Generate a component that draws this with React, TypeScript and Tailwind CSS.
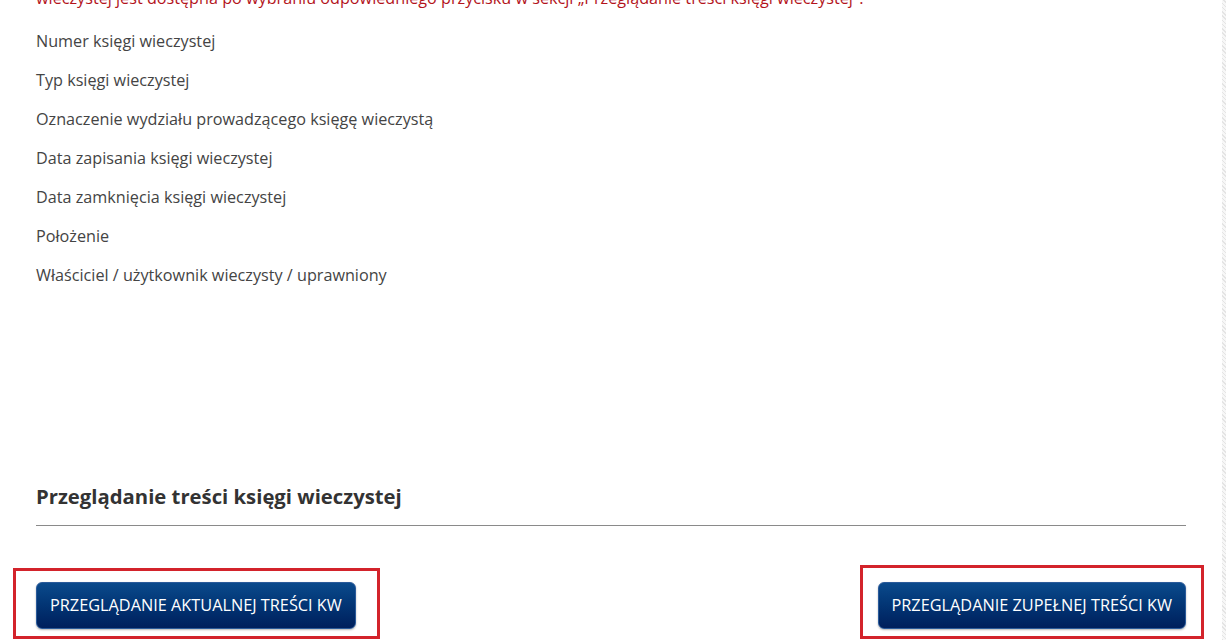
const fields = [
  'Numer księgi wieczystej',
  'Typ księgi wieczystej',
  'Oznaczenie wydziału prowadzącego księgę wieczystą',
  'Data zapisania księgi wieczystej',
  'Data zamknięcia księgi wieczystej',
  'Położenie',
  'Właściciel / użytkownik wieczysty / uprawniony',
];

function KwButton({ label }: { label: string }) {
  return (
    <button className="h-[47px] px-[13px] rounded-[6px] border border-[#2a5a9a] bg-gradient-to-b from-[#0b4a8c] to-[#001f5c] text-white text-[16.3px] leading-none shadow-[0_1px_2px_rgba(0,0,0,0.3)]">
      {label}
    </button>
  );
}

export default function App() {
  return (
    <div className="relative h-[640px] w-[1226px] overflow-hidden bg-white font-['Open_Sans',sans-serif]">
      <div className="absolute right-0 top-0 h-full w-[4px] bg-[repeating-linear-gradient(45deg,#e4e4e4_0px,#e4e4e4_1px,#f7f7f7_1px,#f7f7f7_3px)]" />

      <div className="w-[1150px] ml-[36px]">
        <p className="mt-[-14px] mb-[19px] text-[16.2px] leading-[24px] text-[#b3141c]">
          wieczystej jest dostępna po wybraniu odpowiedniego przycisku w sekcji „Przeglądanie treści księgi wieczystej".
        </p>

        <div className="flex flex-col gap-[15px]">
          {fields.map(f => (
            <p key={f} className="text-[16.2px] leading-[24px] text-[#444]">{f}</p>
          ))}
        </div>

        <h2 className="mt-[195px] pb-[15px] text-[20.3px] leading-[28px] font-bold text-[#333] border-b border-[#8a8a8a]">
          Przeglądanie treści księgi wieczystej
        </h2>

        <div className="mt-[56px] flex justify-between">
          <KwButton label="PRZEGLĄDANIE AKTUALNEJ TREŚCI KW" />
          <KwButton label="PRZEGLĄDANIE ZUPEŁNEJ TREŚCI KW" />
        </div>
      </div>

      {/* red annotation frames */}
      <div className="absolute left-[13px] top-[568px] h-[71px] w-[367px] border-[3px] border-[#d3232b]" />
      <div className="absolute left-[860px] top-[565px] h-[74px] w-[344px] border-[3px] border-[#d3232b]" />
    </div>
  );
}
